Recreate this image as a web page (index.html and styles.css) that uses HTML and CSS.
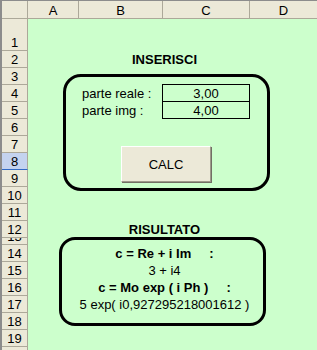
FILE: index.html
```html
<!DOCTYPE html>
<html lang="it">
<head>
  <meta charset="UTF-8" />
  <title>Numeri complessi</title>
  <link rel="stylesheet" href="styles.css">
</head>
<body>
  <div class="sheet">
    <div class="row head">
      <div class="corner"></div>
      <div class="col-head">A</div>
      <div class="col-head">B</div>
      <div class="col-head">C</div>
      <div class="col-head last">D</div>
    </div>
    <div class="row tall"><div class="num">1</div></div>
    <div class="row"><div class="num">2</div><div class="cell span bold">INSERISCI</div></div>
    <div class="row"><div class="num">3</div></div>
    <div class="row">
      <div class="num">4</div>
      <div class="cell col-b">parte reale :</div>
      <div class="cell boxed">3,00</div>
    </div>
    <div class="row">
      <div class="num">5</div>
      <div class="cell col-b">parte img :</div>
      <div class="cell boxed">4,00</div>
    </div>
    <div class="row"><div class="num">6</div></div>
    <div class="row"><div class="num">7</div></div>
    <div class="row"><div class="num selected">8</div></div>
    <div class="row"><div class="num">9</div></div>
    <div class="row"><div class="num">10</div></div>
    <div class="row"><div class="num">11</div></div>
    <div class="row"><div class="num">12</div><div class="cell span bold">RISULTATO</div></div>
    <div class="row short"><div class="num">13</div></div>
    <div class="row"><div class="num">14</div><div class="cell span bold">c = Re + i Im     :</div></div>
    <div class="row"><div class="num">15</div><div class="cell span">3 + i4</div></div>
    <div class="row"><div class="num">16</div><div class="cell span bold">c = Mo exp ( i Ph )     :</div></div>
    <div class="row"><div class="num">17</div><div class="cell span">5 exp( i0,927295218001612 )</div></div>
    <div class="row"><div class="num">18</div></div>
    <div class="row"><div class="num">19</div></div>
    <div class="row"><div class="num">20</div></div>
  </div>

  <!-- drawing objects over the sheet -->
  <div class="shape shape-input"></div>
  <div class="shape shape-result"></div>
  <button class="calc">CALC</button>
</body>
</html>
```

FILE: styles.css
```css
body {
  margin: 0;
  width: 317px;
  height: 350px;
  overflow: hidden;
  font-family: "Liberation Sans", Arial, sans-serif;
  font-size: 13px;
  color: #000;
  position: relative;
}

.sheet {
  border-top: 1px solid #8c8c8c;
  border-left: 2px solid #8c8c8c;
  background: #ccffcc;
  height: 349px;
}

.row {
  display: grid;
  grid-template-columns: 26px 51px 84px 87px 1fr;
  height: 17px;
}

.row.head {
  height: 18px;
}

.row.tall {
  height: 32px;
}

.row.short {
  height: 7px;
}

.corner,
.col-head,
.num {
  box-sizing: border-box;
  background: #ece9d8;
  border-right: 1px solid #aca899;
  border-bottom: 1px solid #aca899;
  display: flex;
  justify-content: center;
  align-items: flex-end;
  line-height: 15px;
  overflow: hidden;
}

.col-head.last {
  border-right: none;
}

.num {
  grid-column: 1;
}

.num.selected {
  background: #c4d3ef;
  border-bottom-color: #316ac5;
}

.cell {
  display: flex;
  align-items: flex-end;
  line-height: 15px;
  padding-bottom: 1px;
  white-space: pre;
  box-sizing: border-box;
}

.bold {
  font-weight: bold;
}

.span {
  grid-column: 3 / 5;
  justify-content: center;
}

.col-b {
  grid-column: 3;
  padding-left: 3px;
}

.boxed {
  grid-column: 4;
  margin: -1px 0 0 -1px;
  border: 1px solid #000;
  padding-bottom: 0;
  justify-content: center;
  background: #ccffcc;
}

.shape {
  position: absolute;
  box-sizing: border-box;
  border: 3px solid #000;
}

.shape-input {
  left: 63px;
  top: 74px;
  width: 207px;
  height: 117px;
  border-radius: 18px;
}

.shape-result {
  left: 59px;
  top: 237px;
  width: 207px;
  height: 89px;
  border-radius: 16px;
}

.calc {
  position: absolute;
  left: 121px;
  top: 146px;
  width: 90px;
  height: 36px;
  margin: 0;
  padding: 0;
  box-sizing: border-box;
  background: #ece9d8;
  border: 1px solid;
  border-color: #fff #9d9a8a #9d9a8a #fff;
  box-shadow: 1px 1px 0 #716f64;
  font-family: "Liberation Sans", Arial, sans-serif;
  font-size: 13px;
  color: #000;
}
```
